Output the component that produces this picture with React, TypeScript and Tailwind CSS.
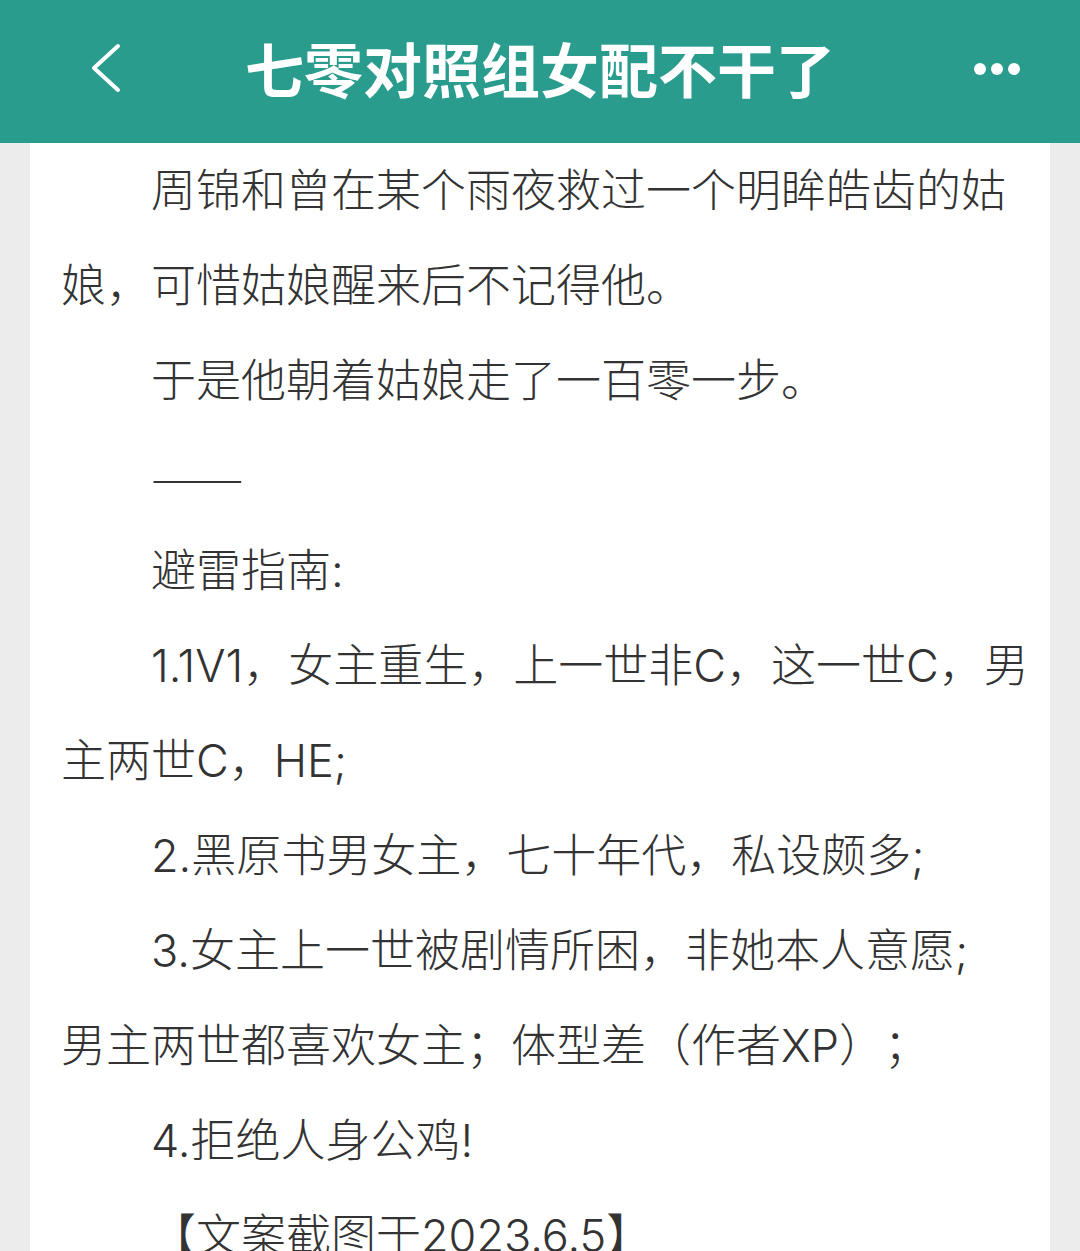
import React from "react";

const lines: { text: string; indent: boolean }[] = [
  { text: "周锦和曾在某个雨夜救过一个明眸皓齿的姑", indent: true },
  { text: "娘，可惜姑娘醒来后不记得他。", indent: false },
  { text: "于是他朝着姑娘走了一百零一步。", indent: true },
  { text: "——", indent: true },
  { text: "避雷指南:", indent: true },
  { text: "1.1V1，女主重生，上一世非C，这一世C，男", indent: true },
  { text: "主两世C，HE;", indent: false },
  { text: "2.黑原书男女主，七十年代，私设颇多;", indent: true },
  { text: "3.女主上一世被剧情所困，非她本人意愿;", indent: true },
  { text: "男主两世都喜欢女主；体型差（作者XP）；", indent: false },
  { text: "4.拒绝人身公鸡!", indent: true },
  { text: "【文案截图于2023.6.5】", indent: true },
];

export default function App() {
  return (
    <div
      className="w-[1080px] h-[1251px] overflow-hidden bg-[#ececec] flex flex-col"
      style={{ fontFamily: 'Inter, "Noto Sans CJK SC", "Noto Sans", sans-serif' }}
    >
      <header className="h-[143px] bg-[#2a9c8e] grid grid-cols-[1fr_auto_1fr] items-center px-[88px] shrink-0">
        <svg width="34" height="52" viewBox="0 0 34 52" fill="none" className="-mt-[8px]">
          <path d="M30 4 L6 26 L30 48" stroke="white" strokeWidth="4" strokeLinecap="round" strokeLinejoin="round" />
        </svg>
        <h1
          className="text-white text-[59px] font-bold leading-none -mt-[8px]"
          style={{ fontFamily: '"Noto Sans CJK SC", sans-serif' }}
        >
          七零对照组女配不干了
        </h1>
        <div className="flex gap-[5px] -mt-[6px] justify-self-end -mr-[28px]">
          <span className="w-[12px] h-[12px] rounded-full bg-white" />
          <span className="w-[12px] h-[12px] rounded-full bg-white" />
          <span className="w-[12px] h-[12px] rounded-full bg-white" />
        </div>
      </header>
      <main className="mx-[30px] bg-white flex-1 px-[31px]">
        {lines.map((l, i) => (
          <div
            key={i}
            className={`h-[95px] leading-[95px] text-[45px] font-light text-[#333333] whitespace-nowrap [text-spacing-trim:space-all] ${l.indent ? "pl-[90px]" : ""}`}
          >
            {l.text === "——" ? (
              <span
                className="inline-block origin-left scale-x-[1.24]"
                style={{ fontFamily: '"Noto Sans CJK SC", sans-serif' }}
              >
                {l.text}
              </span>
            ) : (
              l.text
            )}
          </div>
        ))}
      </main>
    </div>
  );
}
